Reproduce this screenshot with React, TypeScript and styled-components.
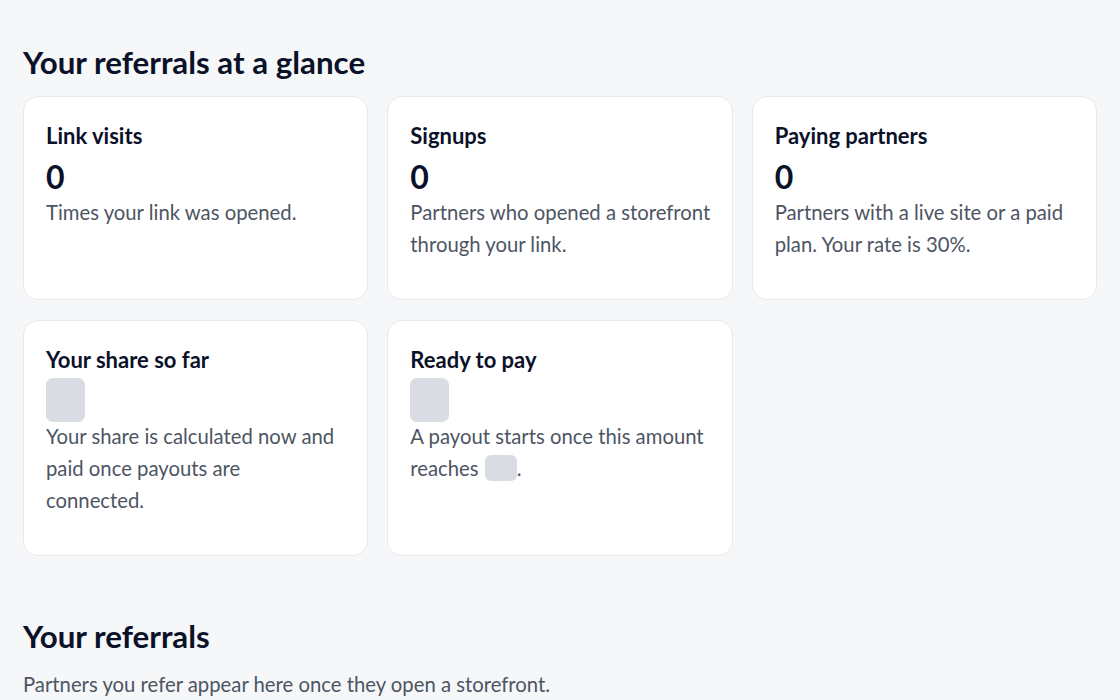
import React from "react";
import styled, { createGlobalStyle } from "styled-components";

const GlobalStyle = createGlobalStyle`
  *, *::before, *::after { box-sizing: border-box; }
  html, body { margin: 0; padding: 0; }
  body {
    background: #f6f7f9;
    font-family: Lato, "Noto Sans", "Liberation Sans", sans-serif;
    color: #0b1128;
  }
`;

const Page = styled.main`
  padding: 44px 23px 0 23px;
  min-height: 700px;
`;

const Section = styled.section<{ $gapTop?: number }>`
  margin-top: ${(p) => p.$gapTop ?? 0}px;
`;

const Heading = styled.h2<{ $tight?: boolean }>`
  margin: 0 0 ${(p) => (p.$tight ? 0 : 15)}px 0;
  font-size: 31.3px;
  line-height: 37px;
  font-weight: 700;
  color: #0b1128;
`;

const Grid = styled.div`
  display: grid;
  grid-template-columns: repeat(3, 1fr);
  gap: 20px 19px;
`;

const Card = styled.article`
  background: #ffffff;
  border: 1px solid #e6e8ec;
  border-radius: 15px;
  padding: 25px 18px 39px 22px;
  display: flex;
  flex-direction: column;
`;

const Label = styled.h3`
  margin: 0;
  font-size: 22px;
  line-height: 28px;
  font-weight: 700;
  color: #0b1128;
`;

const ValueSlot = styled.div`
  margin-top: 4px;
  height: 42px;
`;

const Number = styled.div`
  font-size: 32px;
  line-height: 46px;
  font-weight: 700;
  color: #0b1128;
`;

const Skeleton = styled.div`
  width: 39px;
  height: 44px;
  border-radius: 7px;
  background: #d9dce3;
`;

const InlineSkeleton = styled.span`
  display: inline-block;
  width: 32px;
  height: 26px;
  border-radius: 6px;
  background: #d9dce3;
  vertical-align: -5px;
  margin-left: 1px;
`;

const Desc = styled.p<{ $measure?: number }>`
  margin: 0;
  max-width: ${(p) => (p.$measure ? `${p.$measure}px` : "none")};
  font-size: 20.3px;
  line-height: 32px;
  color: #4d5563;
`;

const Lead = styled.p`
  margin: 13px 0 0 0;
  font-size: 20.3px;
  line-height: 32px;
  color: #4d5563;
`;

type Stat = {
  label: string;
  value?: string;
  measure?: number;
  desc: React.ReactNode;
};

const stats: Stat[] = [
  { label: "Link visits", value: "0", desc: "Times your link was opened." },
  { label: "Signups", value: "0", desc: "Partners who opened a storefront through your link." },
  {
    label: "Paying partners",
    value: "0",
    desc: "Partners with a live site or a paid plan. Your rate is 30%.",
  },
  {
    label: "Your share so far",
    measure: 294,
    desc: "Your share is calculated now and paid once payouts are connected.",
  },
  {
    label: "Ready to pay",
    desc: (
      <>
        A payout starts once this amount reaches <InlineSkeleton />.
      </>
    ),
  },
];

export default function App() {
  return (
    <>
      <GlobalStyle />
      <Page>
        <Section>
          <Heading>Your referrals at a glance</Heading>
          <Grid>
            {stats.map((s) => (
              <Card key={s.label}>
                <Label>{s.label}</Label>
                <ValueSlot>{s.value !== undefined ? <Number>{s.value}</Number> : <Skeleton />}</ValueSlot>
                <Desc $measure={s.measure}>{s.desc}</Desc>
              </Card>
            ))}
          </Grid>
        </Section>
        <Section $gapTop={62}>
          <Heading $tight>Your referrals</Heading>
          <Lead>Partners you refer appear here once they open a storefront.</Lead>
        </Section>
      </Page>
    </>
  );
}
